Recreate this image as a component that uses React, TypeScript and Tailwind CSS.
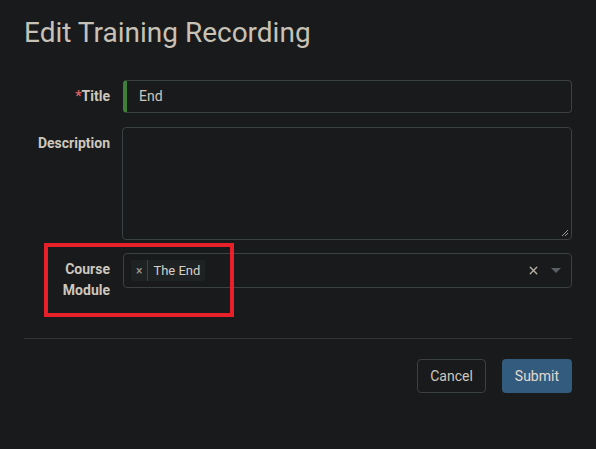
import { X } from 'lucide-react'

export default function App() {
  return (
    <div className="relative h-[449px] w-[596px] bg-[#181a1b] font-['Roboto',sans-serif] text-[#cdc7bd]">
      <div className="px-6 pt-[14px]">
        <h1 className="text-[28px] leading-[38px] text-[#c8c1b6]">Edit Training Recording</h1>

        <div className="mt-[28px] flex flex-col">
          {/* Title */}
          <div className="flex items-center">
            <label className="w-[86px] text-right text-[14px] font-bold">
              <span className="text-[#e06060]">*</span>Title
            </label>
            <div className="ml-[13px] flex h-[33px] flex-1 items-center rounded-[4px] border border-[#3b4043] border-l-[4px] border-l-[#3f7f3a] bg-[#181a1b] pl-[12px] text-[14px] text-[#cdc7bd]">
              End
            </div>
          </div>

          {/* Description */}
          <div className="mt-[14px] flex items-start">
            <label className="w-[86px] pt-[6px] text-right text-[14px] font-bold">Description</label>
            <div className="relative ml-[12px] h-[113px] flex-1 rounded-[4px] border border-[#3b4043] bg-[#181a1b]">
              <svg className="absolute bottom-[2px] right-[2px]" width="8" height="8" viewBox="0 0 8 8">
                <path d="M1 7L7 1M4 7L7 4" stroke="#9a9a9a" strokeWidth="1" />
              </svg>
            </div>
          </div>

          {/* Course Module */}
          <div className="mt-[13px] flex items-start">
            <label className="w-[86px] pt-[6px] text-right text-[14px] font-bold leading-[21px]">
              Course
              <br />
              Module
            </label>
            <div className="ml-[13px] flex h-[35px] flex-1 items-center rounded-[4px] border border-[#3b4043] bg-[#181a1b] pl-[7px] pr-[10px]">
              <div className="flex h-[21px] items-center rounded-[2px] bg-[#1f2223] text-[13px]">
                <span className="px-[5px] text-[12px] text-[#a8a196]">×</span>
                <span className="h-full w-px bg-[#27496b]" />
                <span className="pl-[5px] pr-[5px] text-[#d6d0c6]">The End</span>
              </div>
              <div className="flex-1" />
              <X className="size-[13px] text-[#b9b2a6]" strokeWidth={2.5} />
              <svg className="ml-[11px]" width="10" height="6" viewBox="0 0 10 6">
                <path d="M0 0H10L5 5Z" fill="#5a5f63" />
              </svg>
            </div>
          </div>
        </div>

        <div className="mt-[37px] h-px bg-[#303436]" />

        <div className="mt-[20px] flex justify-end gap-[16px]">
          <button className="h-[34px] rounded-[4px] border border-[#3b4043] px-[12px] text-[14px] text-[#cdc7bd]">
            Cancel
          </button>
          <button className="h-[34px] rounded-[4px] bg-[#335b7d] px-[13px] text-[14px] text-[#e0dbd3]">
            Submit
          </button>
        </div>
      </div>

      {/* annotation */}
      <div className="absolute left-[44px] top-[243px] h-[74px] w-[190px] border-[4px] border-[#e8202a]" />
    </div>
  )
}
